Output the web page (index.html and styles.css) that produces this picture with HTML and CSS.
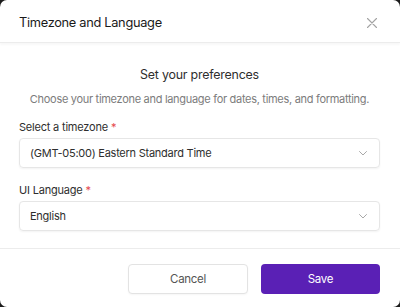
FILE: index.html
```html
<!DOCTYPE html>
<html lang="en">

<head>
    <meta charset="UTF-8">
    <meta name="viewport" content="width=device-width, initial-scale=1.0">
    <title>Timezone and Language</title>
    <link rel="stylesheet" href="styles.css">
</head>

<body>
    <div class="modal">
        <div class="modal-header">
            <h1>Timezone and Language</h1>
            <button class="close" aria-label="Close">
                <svg width="10" height="10" viewBox="0 0 10 10">
                    <path d="M0.5 0.5L9.5 9.5M9.5 0.5L0.5 9.5" stroke="#a3a3a3" stroke-width="1.1" stroke-linecap="round" />
                </svg>
            </button>
        </div>

        <div class="modal-body">
            <h2>Set your preferences</h2>
            <p class="intro">Choose your timezone and language for dates, times, and formatting.</p>

            <label class="label">Select a timezone <span class="req">*</span></label>
            <div class="select">
                <span>(GMT-05:00) Eastern Standard Time</span>
                <svg width="8" height="5" viewBox="0 0 8 5">
                    <path d="M0.5 0.5L4 4L7.5 0.5" fill="none" stroke="#a8a8a8" stroke-width="1" stroke-linecap="round" stroke-linejoin="round" />
                </svg>
            </div>

            <label class="label second">UI Language <span class="req">*</span></label>
            <div class="select">
                <span>English</span>
                <svg width="8" height="5" viewBox="0 0 8 5">
                    <path d="M0.5 0.5L4 4L7.5 0.5" fill="none" stroke="#a8a8a8" stroke-width="1" stroke-linecap="round" stroke-linejoin="round" />
                </svg>
            </div>
        </div>

        <div class="modal-footer">
            <button class="btn btn-secondary">Cancel</button>
            <button class="btn btn-primary">Save</button>
        </div>
    </div>
</body>

</html>
```

FILE: styles.css
```css
body {
    margin: 0;
    background: #1c1c1c;
    font-family: Inter, "Noto Sans", sans-serif;
    color: #222;
}

.modal {
    width: 400px;
    height: 307px;
    background: #fff;
    border-radius: 7px;
    overflow: hidden;
}

.modal-header {
    display: flex;
    align-items: center;
    justify-content: space-between;
    box-sizing: border-box;
    height: 43px;
    padding: 3px 23px 0 19px;
    border-bottom: 1px solid #ececec;
    box-shadow: 0 2px 2px rgba(0, 0, 0, 0.03);
    position: relative;
}

.modal-header h1 {
    margin: 0;
    font-size: 12.8px;
    letter-spacing: -0.3px;
    font-weight: 400;
    color: #1a1a1a;
}

.close {
    background: none;
    border: none;
    padding: 0;
    display: flex;
}

.modal-body {
    display: flex;
    flex-direction: column;
    height: 181px;
    padding: 24px 20px 0 19px;
    border-bottom: 1px solid #ececec;
}

.modal-body h2 {
    margin: 0;
    line-height: 16px;
    text-align: center;
    font-size: 12.4px;
    letter-spacing: -0.2px;
    font-weight: 400;
    color: #2e2e2e;
}

.intro {
    margin: 9px 0 0;
    line-height: 14px;
    text-align: center;
    font-size: 11px;
    letter-spacing: -0.3px;
    color: #7c7c7c;
}

.label {
    margin: 14px 0 4px;
    line-height: 14px;
    font-size: 11px;
    letter-spacing: -0.2px;
    color: #2e2e2e;
}

.label.second {
    margin-top: 15px;
}

.req {
    color: #e5484d;
}

.select {
    display: flex;
    align-items: center;
    justify-content: space-between;
    height: 28px;
    padding: 0 12px 0 10px;
    border: 1px solid #e6e6e6;
    border-radius: 4px;
    font-size: 11px;
    letter-spacing: -0.25px;
    color: #2e2e2e;
    box-shadow: 0 1px 2px rgba(0, 0, 0, 0.05);
}

.modal-footer {
    display: flex;
    justify-content: flex-end;
    gap: 13px;
    padding: 15px 20px 0;
}

.btn {
    width: 120px;
    height: 30px;
    border-radius: 4px;
    font-family: Inter, "Noto Sans", sans-serif;
    font-size: 11.5px;
    letter-spacing: -0.3px;
    cursor: pointer;
}

.btn-secondary {
    background: #fff;
    border: 1px solid #e3e3e3;
    color: #555;
    box-shadow: 0 1px 2px rgba(0, 0, 0, 0.04);
}

.btn-primary {
    width: 119px;
    background: #5a20b5;
    border: none;
    color: #fff;
}
```
